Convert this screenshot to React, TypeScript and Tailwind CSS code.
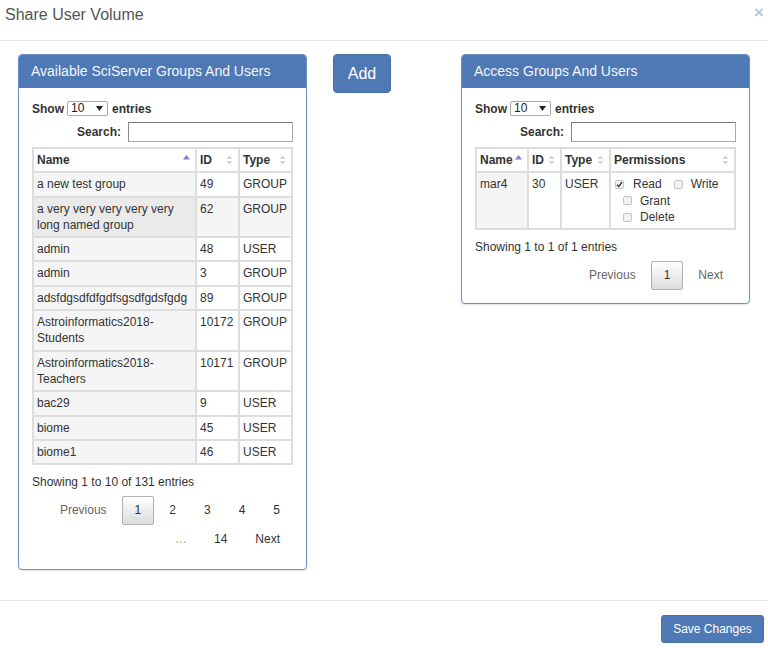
import React from "react";

const FONT = "font-['Liberation_Sans',Arial,Helvetica,sans-serif]";

function SortIcon({ state }: { state: "none" | "asc" }) {
  return (
    <svg width="7" height="12" viewBox="0 0 7 12" className="block">
      {state === "asc" ? (
        <polygon points="0,5.5 3.5,1 7,5.5" fill="#7f7fd2" />
      ) : (
        <>
          <polygon points="0.5,5 3.5,1.5 6.5,5" fill="#d3d3d3" />
          <polygon points="0.5,7 3.5,10.5 6.5,7" fill="#d3d3d3" />
        </>
      )}
    </svg>
  );
}

function Th({ children, sort, w }: { children: React.ReactNode; sort: "none" | "asc"; w: string }) {
  return (
    <th
      className={`relative border border-[#dddddd] px-[3px] py-[3px] text-left align-top text-[12px] font-bold leading-[16.3px] text-[#333] ${w}`}
    >
      {children}
      <span className="absolute right-[5px] top-[5px]">
        <SortIcon state={sort} />
      </span>
    </th>
  );
}

function Td({ children, bg, w }: { children: React.ReactNode; bg?: string; w?: string }) {
  return (
    <td
      className={`border border-[#dddddd] px-[3px] py-[3px] align-top text-[12px] leading-[16.3px] text-[#333] ${bg ?? "bg-white"} ${w ?? ""}`}
    >
      {children}
    </td>
  );
}

function ShowSearch() {
  return (
    <div className="flex flex-col">
      <div className="flex h-[15px] items-center text-[12px] font-bold text-[#333]">
        <span>Show</span>
        <div className="ml-[3px] mr-[4px] flex h-[15px] w-[41px] items-center justify-between rounded-[2px] border border-[#a9a9a9] bg-white pl-[3px] pr-[4px] text-[12px] font-normal leading-[13px] text-[#222]">
          <span>10</span>
          <svg width="7" height="5" viewBox="0 0 7 5">
            <polygon points="0,0 7,0 3.5,5" fill="#222" />
          </svg>
        </div>
        <span>entries</span>
      </div>
      <div className="mt-[6px] flex items-center justify-end">
        <span className="text-[12px] font-bold text-[#333]">Search:</span>
        <div className="ml-[7px] h-[20px] w-[165px] border border-[#a9a9a9] border-t-[#767676] border-l-[#8a8a8a] bg-white" />
      </div>
    </div>
  );
}

function PageBtn({
  children,
  current,
  disabled,
}: {
  children: React.ReactNode;
  current?: boolean;
  disabled?: boolean;
}) {
  return (
    <span
      className={`ml-[2px] inline-block rounded-[2px] border px-[12px] py-[6px] text-[12px] leading-[15px] ${
        current
          ? "border-[#b0b0b0] bg-gradient-to-b from-white to-[#dcdcdc] text-[#333]"
          : "border-transparent text-[#333]"
      } ${disabled ? "text-[#666]" : ""}`}
    >
      {children}
    </span>
  );
}

function Checkbox({ checked }: { checked?: boolean }) {
  return (
    <span className="inline-flex h-[9px] w-[9px] items-center justify-center rounded-[2px] border border-[#c4c4c4] bg-[#f2f2f2]">
      {checked && (
        <svg width="7" height="7" viewBox="0 0 7 7">
          <path d="M1 3.8 L2.8 5.5 L6 1.2" stroke="#333" strokeWidth="1.4" fill="none" />
        </svg>
      )}
    </span>
  );
}

function Panel({ title, children }: { title: string; children: React.ReactNode }) {
  return (
    <div className="w-[289px] overflow-hidden rounded-[4px] border border-[#6f92c6] bg-white shadow-[0_1px_2px_rgba(0,0,0,0.12)]">
      <div className="flex h-[33px] items-center bg-[#4f79b4] pl-[12px] text-[14px] text-[#f4f6fa]">{title}</div>
      {children}
    </div>
  );
}

const leftRows: { name: React.ReactNode; id: string; type: string }[] = [
  { name: "a new test group", id: "49", type: "GROUP" },
  { name: <>a very very very very very<br />long named group</>, id: "62", type: "GROUP" },
  { name: "admin", id: "48", type: "USER" },
  { name: "admin", id: "3", type: "GROUP" },
  { name: "adsfdgsdfdfgdfsgsdfgdsfgdg", id: "89", type: "GROUP" },
  { name: <>Astroinformatics2018-<br />Students</>, id: "10172", type: "GROUP" },
  { name: <>Astroinformatics2018-<br />Teachers</>, id: "10171", type: "GROUP" },
  { name: "bac29", id: "9", type: "USER" },
  { name: "biome", id: "45", type: "USER" },
  { name: "biome1", id: "46", type: "USER" },
];

export default function App() {
  return (
    <div className={`${FONT} flex h-[648px] w-[768px] flex-col bg-white text-[#333]`}>
      {/* header */}
      <div className="flex h-[41px] items-start justify-between border-b border-[#e5e5e5]">
        <div className="pl-[5px] pt-[3px] text-[16px] leading-[24px] text-[#555]">Share User Volume</div>
        <div className="pr-[4px] pt-[3px] text-[17px] font-bold leading-[20px] text-[#c4c4c4]">×</div>
      </div>

      {/* body */}
      <div className="flex flex-1 items-start pl-[18px] pt-[13px]">
        <Panel title="Available SciServer Groups And Users">
          <div className="px-[13px] pb-[15px] pt-[13px]">
            <ShowSearch />
            <table className="mt-[5px] w-[261px] table-fixed border-separate border-spacing-0 border border-[#dddddd]">
              <thead>
                <tr>
                  <Th sort="asc" w="w-[163px]">Name</Th>
                  <Th sort="none" w="w-[43px]">ID</Th>
                  <Th sort="none" w="w-[53px]">Type</Th>
                </tr>
              </thead>
              <tbody>
                {leftRows.map((r, i) => (
                  <tr key={i}>
                    <Td bg={i === 1 ? "bg-[#eaeaea]" : "bg-[#f5f5f5]"}>{r.name}</Td>
                    <Td bg={i === 1 ? "bg-[#f5f5f5]" : "bg-white"}>{r.id}</Td>
                    <Td bg={i === 1 ? "bg-[#f5f5f5]" : "bg-white"}>{r.type}</Td>
                  </tr>
                ))}
              </tbody>
            </table>
            <div className="mt-[9px] text-[12px] leading-[16px] text-[#333]">Showing 1 to 10 of 131 entries</div>
            <div className="mt-[6px] flex flex-wrap items-center justify-end">
              <PageBtn disabled>Previous</PageBtn>
              <PageBtn current>1</PageBtn>
              <PageBtn>2</PageBtn>
              <PageBtn>3</PageBtn>
              <PageBtn>4</PageBtn>
              <PageBtn>5</PageBtn>
              <span className="inline-block px-[12px] text-[12px] leading-[29px] text-[#999]">…</span>
              <PageBtn>14</PageBtn>
              <PageBtn>Next</PageBtn>
            </div>
          </div>
        </Panel>

        <button className="ml-[26px] flex h-[39px] w-[58px] items-center justify-center rounded-[4px] border border-[#46709f] bg-[#4f79b4] text-[16px] text-white">
          Add
        </button>

        <div className="ml-[70px]">
          <Panel title="Access Groups And Users">
            <div className="px-[13px] pb-[13px] pt-[13px]">
              <ShowSearch />
              <table className="mt-[5px] w-[261px] table-fixed border-separate border-spacing-0 border border-[#dddddd]">
                <thead>
                  <tr>
                    <Th sort="asc" w="w-[52px]">Name</Th>
                    <Th sort="none" w="w-[33px]">ID</Th>
                    <Th sort="none" w="w-[49px]">Type</Th>
                    <Th sort="none" w="w-[125px]">Permissions</Th>
                  </tr>
                </thead>
                <tbody>
                  <tr>
                    <Td bg="bg-[#f5f5f5]">mar4</Td>
                    <Td>30</Td>
                    <Td>USER</Td>
                    <Td>
                      <div className="flex flex-col">
                        <div className="flex items-center">
                          <span className="ml-[1px] flex"><Checkbox checked /></span>
                          <span className="ml-[9px]">Read</span>
                          <span className="ml-[12px] flex"><Checkbox /></span>
                          <span className="ml-[8px]">Write</span>
                        </div>
                        <div className="flex items-center">
                          <span className="ml-[9px] flex"><Checkbox /></span>
                          <span className="ml-[8px]">Grant</span>
                        </div>
                        <div className="flex items-center">
                          <span className="ml-[9px] flex"><Checkbox /></span>
                          <span className="ml-[8px]">Delete</span>
                        </div>
                      </div>
                    </Td>
                  </tr>
                </tbody>
              </table>
              <div className="mt-[9px] text-[12px] leading-[16px] text-[#333]">Showing 1 to 1 of 1 entries</div>
              <div className="mt-[6px] flex flex-wrap items-center justify-end">
                <PageBtn disabled>Previous</PageBtn>
                <PageBtn current>1</PageBtn>
                <PageBtn disabled>Next</PageBtn>
              </div>
            </div>
          </Panel>
        </div>
      </div>

      {/* footer */}
      <div className="flex h-[48px] items-start justify-end border-t border-[#e5e5e5] pr-[4px] pt-[14px]">
        <button className="flex h-[28px] w-[103px] items-center justify-center rounded-[3px] border border-[#46709f] bg-[#4f79b4] text-[12px] text-white">
          Save Changes
        </button>
      </div>
    </div>
  );
}
